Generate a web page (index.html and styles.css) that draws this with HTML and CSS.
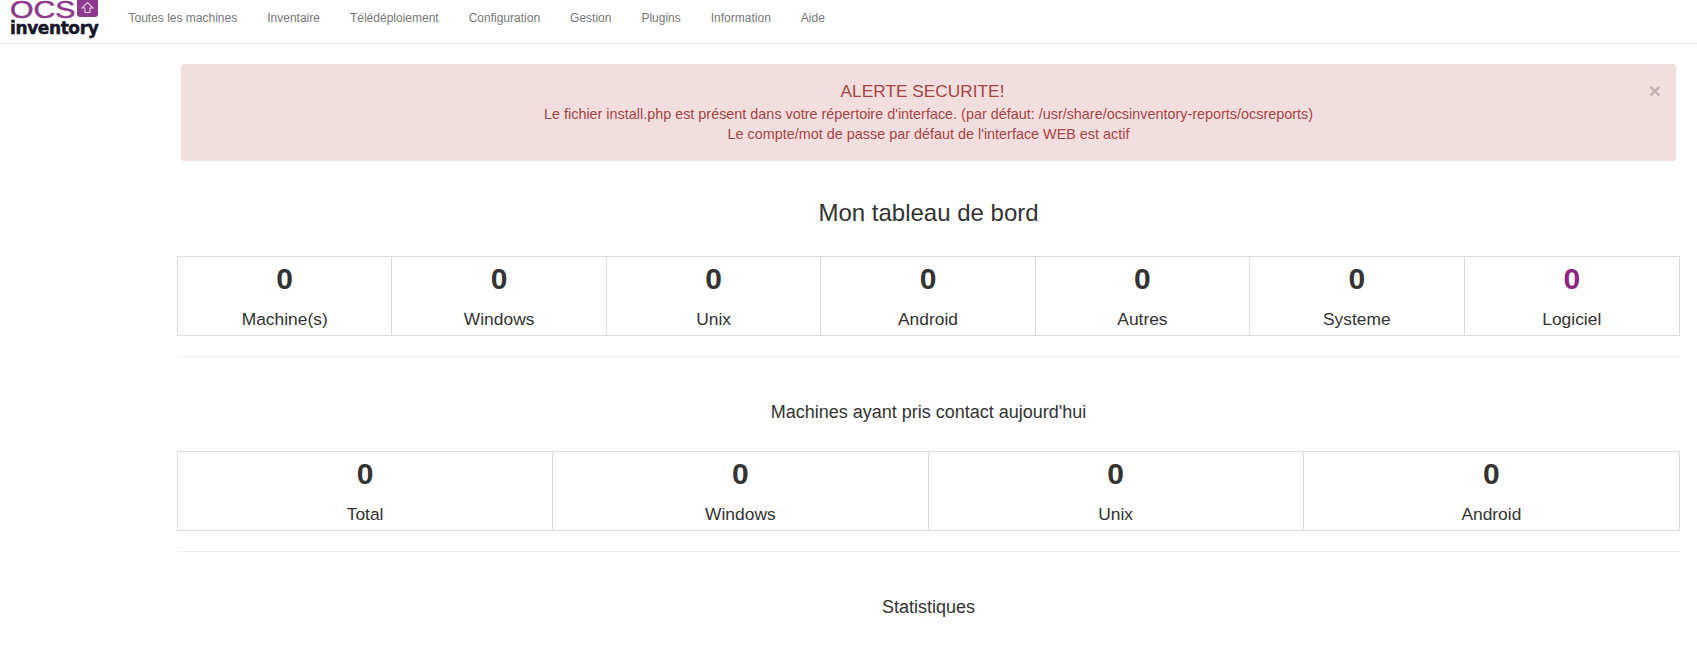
FILE: index.html
```html
<!DOCTYPE html>
<html lang="fr">
<head>
<meta charset="utf-8">
<title>OCS Inventory</title>
<link rel="stylesheet" href="styles.css">
</head>
<body>
<nav class="navbar">
  <a class="logo" href="#">
    <span class="logo-top">
      <span class="logo-ocs">OCS</span>
      <svg class="logo-badge" viewBox="0 0 21 17" width="21" height="17" aria-hidden="true">
        <path d="M0 0H21V14a3 3 0 0 1-3 3H3a3 3 0 0 1-3-3Z" fill="#8e3a8e"/>
        <path d="M10.5 2.5L16 8H13V12.5H8V8H5Z" fill="none" stroke="#e6cbe6" stroke-width="1.1"/>
      </svg>
    </span>
    <span class="logo-name">inventory</span>
  </a>
  <ul class="menu">
    <li><a href="#">Toutes les machines</a></li>
    <li><a href="#">Inventaire</a></li>
    <li><a href="#">Télédéploiement</a></li>
    <li><a href="#">Configuration</a></li>
    <li><a href="#">Gestion</a></li>
    <li><a href="#">Plugins</a></li>
    <li><a href="#">Information</a></li>
    <li><a href="#">Aide</a></li>
  </ul>
</nav>
<main class="content">
  <div class="alert">
    <span class="close">×</span>
    <div class="alert-title">ALERTE SECURITE!</div>
    <div>Le fichier install.php est présent dans votre répertoire d'interface. (par défaut: /usr/share/ocsinventory-reports/ocsreports)</div>
    <div>Le compte/mot de passe par défaut de l'interface WEB est actif</div>
  </div>
  <h1 class="title">Mon tableau de bord</h1>
  <div class="stats seven">
    <div class="stat"><b>0</b><span>Machine(s)</span></div>
    <div class="stat"><b>0</b><span>Windows</span></div>
    <div class="stat"><b>0</b><span>Unix</span></div>
    <div class="stat"><b>0</b><span>Android</span></div>
    <div class="stat"><b>0</b><span>Autres</span></div>
    <div class="stat"><b>0</b><span>Systeme</span></div>
    <div class="stat"><b class="accent">0</b><span>Logiciel</span></div>
  </div>
  <hr class="rule">
  <h2 class="subtitle">Machines ayant pris contact aujourd'hui</h2>
  <div class="stats four">
    <div class="stat"><b>0</b><span>Total</span></div>
    <div class="stat"><b>0</b><span>Windows</span></div>
    <div class="stat"><b>0</b><span>Unix</span></div>
    <div class="stat"><b>0</b><span>Android</span></div>
  </div>
  <hr class="rule">
  <h2 class="subtitle">Statistiques</h2>
</main>
</body>
</html>
```
FILE: styles.css
```css
* { box-sizing: border-box; }
html, body { margin: 0; padding: 0; background: #fff; }
body { font-family: "Liberation Sans", Arial, sans-serif; color: #333; font-size: 14px; overflow: hidden; }
a { text-decoration: none; color: inherit; }

.navbar { display: flex; height: 44px; border-bottom: 1px solid #e7e7e7; align-items: flex-start; }
.logo { width: 113px; padding-left: 10px; display: flex; flex-direction: column; flex: none; }
.logo-top { display: flex; height: 19px; align-items: flex-start; gap: 6px; }
.logo-ocs { display: block; width: 61px; height: 17px; font-size: 24px; line-height: 19px; color: #8e3a8e; -webkit-text-stroke: 0.5px #8e3a8e; transform: scaleX(1.26); transform-origin: left top; }
.logo-badge { flex: none; }
.logo-name { font-family: "DejaVu Sans", sans-serif; font-weight: 700; font-size: 17px; line-height: 19px; color: #17172b; letter-spacing: -0.4px; -webkit-text-stroke: 0.5px #17172b; }
.menu { display: flex; list-style: none; margin: 0 0 0 0.5px; padding: 0; }
.menu a { display: block; padding: 0 15px; font-size: 12px; line-height: 36px; color: #777; }

.content { margin: 0 17px 0 177px; }
.alert { position: relative; margin: 20px 4px 0; height: 97px; padding: 17px 20px 0; background: #f2dede; border-radius: 4px; color: #a94442; text-align: center; font-size: 14.4px; line-height: 20px; box-shadow: 0 0 1px #eee; }
.alert-title { font-size: 17.3px; line-height: 21px; margin-bottom: 2px; padding-right: 12px; }
.close { position: absolute; top: 16px; right: 15px; font-size: 21px; font-weight: 700; line-height: 21px; color: #000; opacity: 0.2; }

.title { margin: 37px 0 0; font-size: 24px; font-weight: 400; line-height: 30px; text-align: center; }
.subtitle { margin: 43px 0 0; font-size: 18px; font-weight: 400; line-height: 24px; text-align: center; }
.stats { display: grid; margin-top: 28px; border: 1px solid #ddd; height: 80px; }
.seven { grid-template-columns: repeat(7, 1fr); }
.four { grid-template-columns: repeat(4, 1fr); }
.subtitle + .stats { margin-top: 27px; }
.stat { display: flex; flex-direction: column; align-items: center; border-right: 1px solid #ddd; }
.stat:last-child { border-right: 0; }
.stat b { font-size: 30px; line-height: 34px; margin-top: 5px; color: #333; }
.stat b.accent { color: #8e2382; }
.stat span { font-size: 17.4px; line-height: 20px; margin-top: 12.5px; }
.rule { margin: 20px 0 0; border: 0; border-top: 1px solid #eee; }
```
